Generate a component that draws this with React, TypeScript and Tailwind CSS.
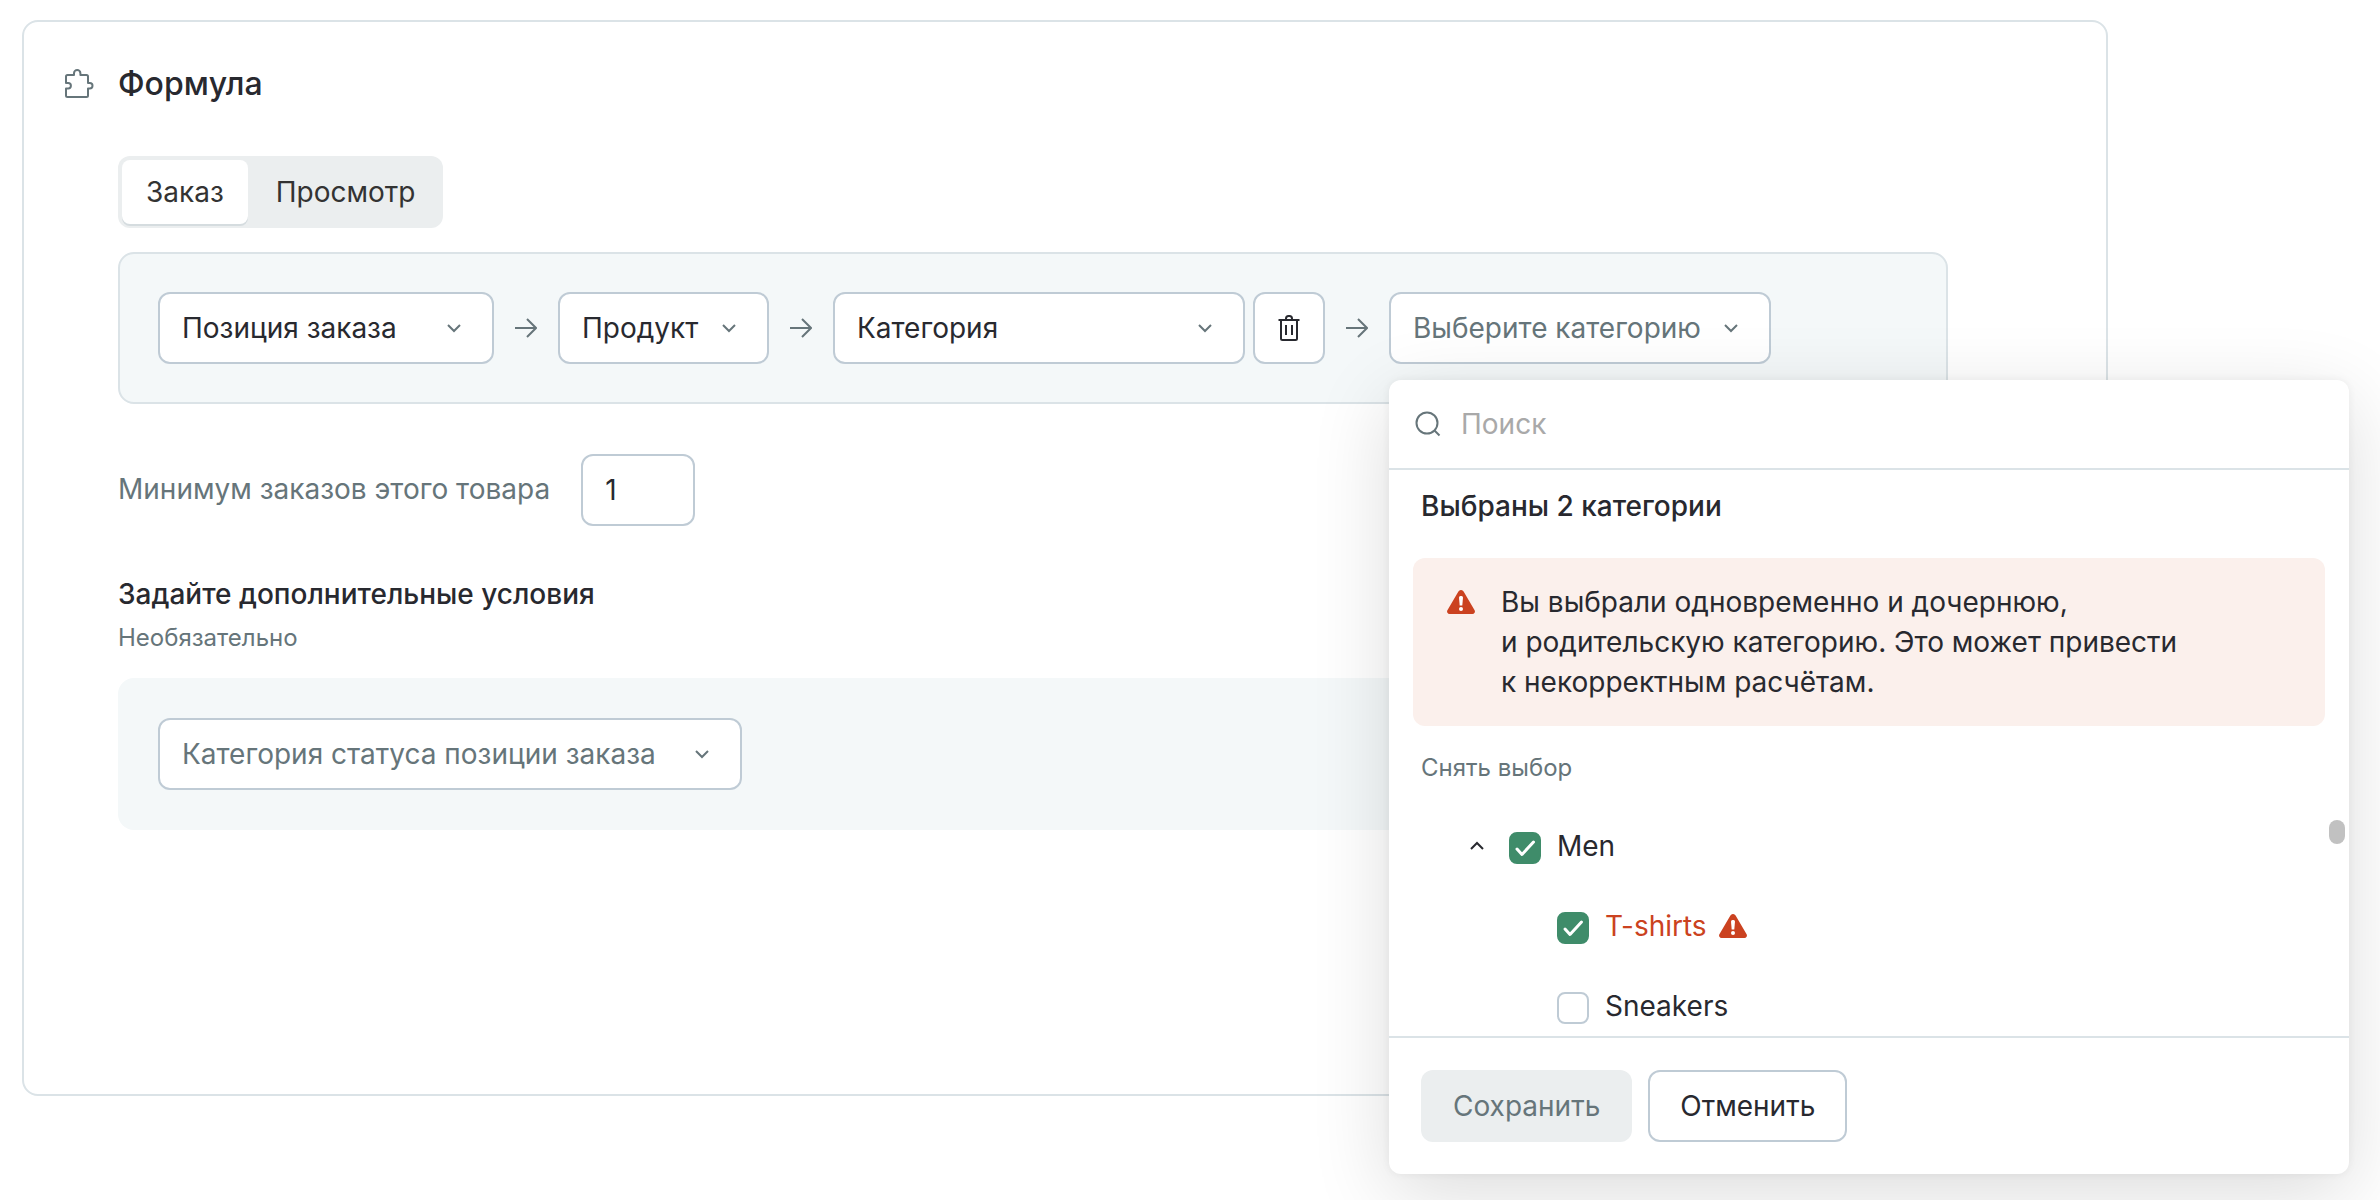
import { useState } from 'react';

function ChevronIcon({ className }: { className: string }) {
  return (
    <svg className={className} width="16" height="10" viewBox="0 0 16 10" fill="none" stroke="currentColor" strokeWidth="2" aria-hidden="true">
      <path d="M2 2l6 6 6-6" />
    </svg>
  );
}

function ArrowIcon() {
  return (
    <svg className="w-[22px] shrink-0 text-[#66757a]" viewBox="0 0 22 22" fill="none" stroke="currentColor" strokeWidth="2" aria-hidden="true">
      <path d="M0 11h21M12 2l9 9-9 9" />
    </svg>
  );
}

function PuzzleIcon() {
  return (
    <svg className="w-8 shrink-0 text-[#66757a]" viewBox="0 0 32 32" fill="none" stroke="currentColor" strokeWidth="2" strokeLinejoin="round" aria-hidden="true">
      <path d="M5.500 7H12V5.300a3.200 3.200 0 0 1 6.400 0V7h6.100A1.500 1.500 0 0 1 26 8.500V15h1.800a2.700 2.700 0 0 1 0 5.400H26v7.100a1.500 1.500 0 0 1-1.500 1.500h-19A1.500 1.500 0 0 1 4 27.500v-7.100h2.200a2.700 2.700 0 0 0 0-5.400H4V8.500A1.500 1.500 0 0 1 5.500 7z" />
    </svg>
  );
}

function TrashIcon() {
  return (
    <svg className="w-[22px]" viewBox="0 0 22 28" fill="none" stroke="currentColor" strokeWidth="2" aria-hidden="true">
      <path d="M.5 6h21M3 6v18.500A1.500 1.500 0 0 0 4.500 26h13a1.500 1.500 0 0 0 1.500-1.500V6M8 6V4.500A2.500 2.500 0 0 1 10.500 2h1A2.500 2.500 0 0 1 14 4.500V6M8 11v10M14 11v10" />
    </svg>
  );
}

function SearchIcon() {
  return (
    <svg className="w-[26px] shrink-0 text-[#66757a]" viewBox="0 0 26 26" fill="none" stroke="currentColor" strokeWidth="2" aria-hidden="true">
      <circle cx="12" cy="12" r="10.500" />
      <path d="M19.500 19.500l5 5" />
    </svg>
  );
}

function WarningIcon() {
  return (
    <svg className="w-7 shrink-0" viewBox="0 0 28 24" aria-hidden="true">
      <path fill="#cb4220" d="M11.400 1.500a3 3 0 0 1 5.200 0l11 18.800A2.500 2.500 0 0 1 25.400 24H2.600a2.500 2.500 0 0 1-2.200-3.700z" />
      <path fill="#fff" d="M12 7.500a1.500 1.500 0 0 1 1.500-1.500h1A1.500 1.500 0 0 1 16 7.500l-.7 8h-2.600z" />
      <circle cx="14" cy="19" r="2" fill="#fff" />
    </svg>
  );
}

type SelectBoxProps = {
  label: string;
  value: string;
  className: string;
};

function SelectBox({ label, value, className }: SelectBoxProps) {
  return (
    <div className="relative w-fit shrink-0">
      <select
        aria-label={label}
        className={`block h-[72px] appearance-none rounded-xl border-2 border-[#bfcbd5] bg-white pl-[22px] ${className}`}
      >
        <option>{value}</option>
      </select>
      <ChevronIcon className="pointer-events-none absolute top-[31px] right-8 text-[#66757a]" />
    </div>
  );
}

type CheckRowProps = {
  label: string;
  checked: boolean;
  warning?: boolean;
  onChange: () => void;
};

function CheckRow({ label, checked, warning, onChange }: CheckRowProps) {
  return (
    <label className="flex h-20 items-center gap-4">
      <span className="relative mt-1 size-8">
        <input
          type="checkbox"
          checked={checked}
          onChange={onChange}
          className="block size-8 appearance-none rounded-lg border-2 border-[#bfcbd5] bg-white checked:border-[#3f8c6a] checked:bg-[#3f8c6a]"
        />
        {checked && (
          <svg className="pointer-events-none absolute inset-0" viewBox="0 0 32 32" fill="none" stroke="#fff" strokeWidth="3" strokeLinecap="round" strokeLinejoin="round" aria-hidden="true">
            <path d="M8 17l5 5.500L24.500 10" />
          </svg>
        )}
      </span>
      <span className={warning ? 'flex items-center gap-3 text-[#cb4220]' : ''}>
        {label}
        {warning && <WarningIcon />}
      </span>
    </label>
  );
}

function CategoryMenu() {
  const [checked, setChecked] = useState({ men: true, tshirts: true, sneakers: false });

  const toggle = (key: keyof typeof checked) => {
    setChecked({ ...checked, [key]: !checked[key] });
  };

  return (
    <div className="absolute top-22 left-0 z-10 w-[960px] rounded-xl bg-white shadow-[0_0_8px_rgba(0,0,0,0.06),0_20px_80px_rgba(0,0,0,0.14)]">
      <div className="flex h-[90px] items-center gap-5 border-b-2 border-[#dbe3e7] px-[26px]">
        <SearchIcon />
        <input type="text" aria-label="Поиск" placeholder="Поиск" className="min-w-0 flex-1 outline-none placeholder:text-[#a9a9a9]" />
      </div>

      <div className="relative h-[566px] overflow-hidden px-6 pt-4">
        <h3 className="px-2 font-medium">Выбраны 2 категории</h3>
        <div className="mt-8 flex gap-[26px] rounded-xl bg-[#fbf0ec] py-6 pr-8 pl-[34px]">
          <div className="flex h-10 items-center">
            <WarningIcon />
          </div>
          <p>
            Вы выбрали одновременно и дочернюю,
            <br />
            и родительскую категорию. Это может привести
            <br />
            к некорректным расчётам.
          </p>
        </div>
        <button type="button" className="mt-[22px] block px-2 text-2xl leading-10 text-[#66757a]">
          Снять выбор
        </button>
        <div className="mt-[18px] flex items-center gap-6 pl-14">
          <button type="button" aria-label="Свернуть">
            <ChevronIcon className="rotate-180" />
          </button>
          <CheckRow label="Men" checked={checked.men} onChange={() => toggle('men')} />
        </div>
        <div className="pl-36">
          <CheckRow label="T-shirts" warning checked={checked.tshirts} onChange={() => toggle('tshirts')} />
          <CheckRow label="Sneakers" checked={checked.sneakers} onChange={() => toggle('sneakers')} />
        </div>
        <div className="absolute top-[350px] right-1 h-6 w-4 rounded-full bg-[#c1c1c1]" />
      </div>

      <div className="flex gap-4 border-t-2 border-[#dbe3e7] p-8">
        <button type="button" disabled className="h-[72px] rounded-xl bg-[#ebeeef] px-8 text-[#66757a]">
          Сохранить
        </button>
        <button type="button" className="h-[72px] rounded-xl border-2 border-[#bfcbd5] bg-white px-[30px]">
          Отменить
        </button>
      </div>
    </div>
  );
}

export default function App() {
  const [tab, setTab] = useState('order');

  return (
    <div className="min-h-screen overflow-hidden bg-white pt-5 pl-[22px] font-['Inter',sans-serif] text-[28px] leading-10 text-[#28292f]">
      <section className="mr-[272px] min-h-[1076px] rounded-2xl border-2 border-[#dbe3e7] bg-white pt-[42px] pr-[158px] pl-[38px]">
        <header className="flex items-center gap-6">
          <PuzzleIcon />
          <h2 className="text-[32px] font-medium">Формула</h2>
        </header>

        <div className="pt-[52px] pl-14">
          <div className="flex w-fit rounded-xl bg-[#ebeeef] p-1">
            <button
              type="button"
              onClick={() => setTab('order')}
              className={`h-16 rounded-lg px-6 text-[#333] ${tab === 'order' ? 'bg-white shadow-[0_2px_0_#d5dcdf]' : ''}`}
            >
              Заказ
            </button>
            <button
              type="button"
              onClick={() => setTab('view')}
              className={`h-16 rounded-lg pr-6 pl-7 text-[#333] ${tab === 'view' ? 'bg-white shadow-[0_2px_0_#d5dcdf]' : ''}`}
            >
              Просмотр
            </button>
          </div>

          <div className="mt-6 flex items-center gap-[21px] rounded-2xl border-2 border-[#dbe3e7] bg-[#f4f8f9] p-[38px]">
            <SelectBox label="Объект" value="Позиция заказа" className="w-[336px]" />
            <ArrowIcon />
            <SelectBox label="Связь" value="Продукт" className="w-[211px]" />
            <ArrowIcon />
            <div className="flex gap-2">
              <SelectBox label="Поле" value="Категория" className="w-[412px]" />
              <button
                type="button"
                aria-label="Удалить"
                className="flex size-[72px] items-center justify-center rounded-xl border-2 border-[#bfcbd5] bg-white"
              >
                <TrashIcon />
              </button>
            </div>
            <ArrowIcon />
            <div className="relative">
              <SelectBox label="Категория" value="Выберите категорию" className="w-[382px] text-[#66757a]" />
              <CategoryMenu />
            </div>
          </div>

          <div className="mt-[50px] flex items-center gap-[31px]">
            <label htmlFor="min-orders" className="pb-[2px] text-[#66757a]">
              Минимум заказов этого товара
            </label>
            <input
              id="min-orders"
              type="text"
              defaultValue="1"
              className="h-[72px] w-[114px] rounded-xl border-2 border-[#bfcbd5] bg-white px-[22px]"
            />
          </div>

          <h3 className="mt-12 font-medium">Задайте дополнительные условия</h3>
          <p className="mt-1 text-2xl leading-10 text-[#66757a]">Необязательно</p>
          <div className="mt-5 rounded-2xl bg-[#f4f8f9] p-10">
            <SelectBox label="Условие" value="Категория статуса позиции заказа" className="w-[584px] text-[#66757a]" />
          </div>
        </div>
      </section>
    </div>
  );
}
